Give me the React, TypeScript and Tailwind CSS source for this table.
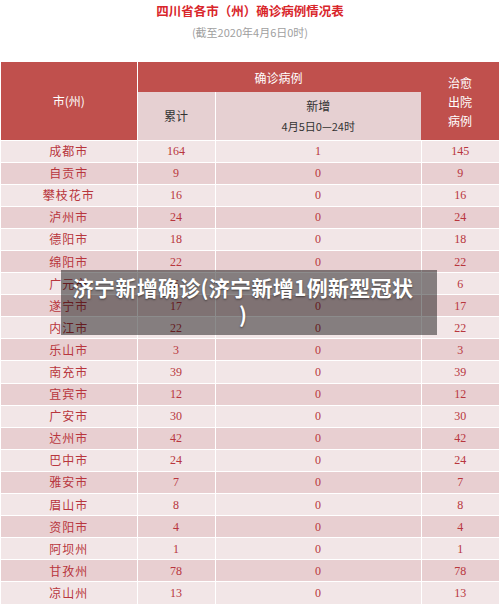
import React from 'react';

const rows: [string, string, string, string][] = [
  ['成都市', '164', '1', '145'],
  ['自贡市', '9', '0', '9'],
  ['攀枝花市', '16', '0', '16'],
  ['泸州市', '24', '0', '24'],
  ['德阳市', '18', '0', '18'],
  ['绵阳市', '22', '0', '22'],
  ['广元市', '6', '0', '6'],
  ['遂宁市', '17', '0', '17'],
  ['内江市', '22', '0', '22'],
  ['乐山市', '3', '0', '3'],
  ['南充市', '39', '0', '39'],
  ['宜宾市', '12', '0', '12'],
  ['广安市', '30', '0', '30'],
  ['达州市', '42', '0', '42'],
  ['巴中市', '24', '0', '24'],
  ['雅安市', '7', '0', '7'],
  ['眉山市', '8', '0', '8'],
  ['资阳市', '4', '0', '4'],
  ['阿坝州', '1', '0', '1'],
  ['甘孜州', '78', '0', '78'],
  ['凉山州', '13', '0', '13'],
];

const sans = "font-['Noto_Sans_CJK_SC',sans-serif]";
const serif = "font-['Liberation_Serif','Noto_Serif_CJK_SC',serif]";

const App: React.FC = () => {
  return (
    <div className={`relative w-[500px] h-[606px] bg-white overflow-hidden ${sans}`}>
      <div className="h-[62px] flex flex-col items-center">
        <h1 className="mt-[3px] text-[12.5px] leading-[16px] font-bold text-[#d9262b]">
          四川省各市（州）确诊病例情况表
        </h1>
        <p className="mt-[6px] text-[11px] leading-[14px] text-[#a0a0a0]">(截至2020年4月6日0时)</p>
      </div>

      <div className="px-px">
        <table className="w-[498px] table-fixed border-collapse text-[12px]">
          <colgroup>
            <col className="w-[136px]" />
            <col className="w-[78px]" />
            <col className="w-[206px]" />
            <col className="w-[78px]" />
          </colgroup>
          <thead>
            <tr className="h-[30px]">
              <th rowSpan={2} className="bg-[#c0504d] text-white font-normal border-r border-white">
                市(州)
              </th>
              <th colSpan={2} className="bg-[#c0504d] text-white font-normal text-left pl-[117px] pt-[1px]">
                确诊病例
              </th>
              <th rowSpan={2} className="bg-[#c0504d] text-white font-normal leading-[19px] pt-[2px]">
                治愈
                <br />
                出院
                <br />
                病例
              </th>
            </tr>
            <tr className="h-[48px]">
              <th className="bg-[#e6d0d2] text-[#333] font-normal border-r border-white">累计</th>
              <th className="bg-[#e6d0d2] text-[#333] font-normal leading-[20px]">
                新增
                <br />
                <span className="text-[11px]">4月5日0—24时</span>
              </th>
            </tr>
          </thead>
          <tbody>
            {rows.map((r, i) => (
              <tr
                key={r[0]}
                className={`h-[22.1px] border-t border-white ${i % 2 === 0 ? 'bg-[#f2e6e7]' : 'bg-[#e8cfd1]'}`}
              >
                <td className="text-center text-[#b8363d] tracking-[1px] border-r border-white">{r[0]}</td>
                <td className={`text-center text-[#b8363d] border-r border-white ${serif}`}>{r[1]}</td>
                <td className={`text-center text-[#b8363d] border-r border-white ${serif}`}>{r[2]}</td>
                <td className={`text-center text-[#b8363d] ${serif}`}>{r[3]}</td>
              </tr>
            ))}
          </tbody>
        </table>
      </div>

      <div className="absolute left-[61px] top-[270px] w-[376px] h-[65px] bg-black/45 pl-[8px] pr-[20px] pt-[4px] text-center">
        <p className="text-white font-bold text-[21px] leading-[27px] tracking-[0.3px] [text-shadow:0_1px_2px_rgba(0,0,0,0.5)]">
          济宁新增确诊(济宁新增1例新型冠状
          <br />)
        </p>
      </div>
    </div>
  );
};

export default App;
